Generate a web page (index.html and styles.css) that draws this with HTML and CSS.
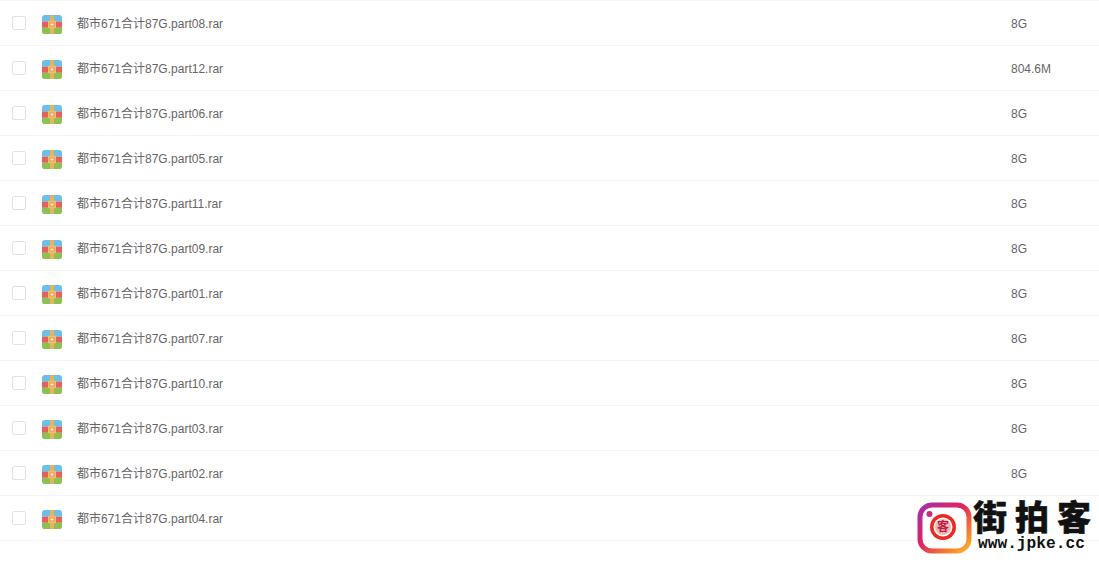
FILE: index.html
```html
<!DOCTYPE html>
<html lang="zh-CN">

<head>
    <meta charset="UTF-8">
    <title>文件列表</title>
    <link rel="stylesheet" href="styles.css">
</head>

<body>
    <svg class="defs" width="0" height="0">
        <symbol id="rar" viewBox="0 0 20 20" preserveAspectRatio="none">
            <path d="M3 0h14a3 3 0 0 1 3 3v4H0V3a3 3 0 0 1 3-3z" fill="#6cbfe8"/>
            <rect y="7" width="20" height="6.500" fill="#e5605c"/>
            <path d="M0 13.500h20V17a3 3 0 0 1-3 3H3a3 3 0 0 1-3-3z" fill="#8cc152"/>
            <rect x="8" width="4" height="20" fill="#e3b563"/>
            <rect x="6" y="6" width="8" height="8" fill="#f3bd62"/>
            <rect x="8" y="8.500" width="4" height="3" fill="#f6ead6" stroke="#d9805a" stroke-width=".7"/>
        </symbol>
    </svg>

    <ul class="list">
        <li class="row"><span class="check"></span><svg class="icon"><use href="#rar"/></svg><span class="name">都市671合计87G.part08.rar</span><span class="size">8G</span></li>
        <li class="row"><span class="check"></span><svg class="icon"><use href="#rar"/></svg><span class="name">都市671合计87G.part12.rar</span><span class="size">804.6M</span></li>
        <li class="row"><span class="check"></span><svg class="icon"><use href="#rar"/></svg><span class="name">都市671合计87G.part06.rar</span><span class="size">8G</span></li>
        <li class="row"><span class="check"></span><svg class="icon"><use href="#rar"/></svg><span class="name">都市671合计87G.part05.rar</span><span class="size">8G</span></li>
        <li class="row"><span class="check"></span><svg class="icon"><use href="#rar"/></svg><span class="name">都市671合计87G.part11.rar</span><span class="size">8G</span></li>
        <li class="row"><span class="check"></span><svg class="icon"><use href="#rar"/></svg><span class="name">都市671合计87G.part09.rar</span><span class="size">8G</span></li>
        <li class="row"><span class="check"></span><svg class="icon"><use href="#rar"/></svg><span class="name">都市671合计87G.part01.rar</span><span class="size">8G</span></li>
        <li class="row"><span class="check"></span><svg class="icon"><use href="#rar"/></svg><span class="name">都市671合计87G.part07.rar</span><span class="size">8G</span></li>
        <li class="row"><span class="check"></span><svg class="icon"><use href="#rar"/></svg><span class="name">都市671合计87G.part10.rar</span><span class="size">8G</span></li>
        <li class="row"><span class="check"></span><svg class="icon"><use href="#rar"/></svg><span class="name">都市671合计87G.part03.rar</span><span class="size">8G</span></li>
        <li class="row"><span class="check"></span><svg class="icon"><use href="#rar"/></svg><span class="name">都市671合计87G.part02.rar</span><span class="size">8G</span></li>
        <li class="row"><span class="check"></span><svg class="icon"><use href="#rar"/></svg><span class="name">都市671合计87G.part04.rar</span></li>
    </ul>

    <div class="mark">
        <svg class="mark-logo" viewBox="0 0 56 52">
            <defs>
                <linearGradient id="ig" x1="0" y1="0" x2="1" y2="1">
                    <stop offset="0" stop-color="#a42fa8"/>
                    <stop offset=".45" stop-color="#e0245e"/>
                    <stop offset=".8" stop-color="#f5842c"/>
                    <stop offset="1" stop-color="#fbb62f"/>
                </linearGradient>
            </defs>
            <rect x="3" y="3" width="49" height="46" rx="12" fill="#fff" stroke="url(#ig)" stroke-width="5"/>
            <circle cx="12.500" cy="12" r="3" fill="#c92a7c"/>
            <circle cx="26" cy="25" r="13" fill="#ea2a24"/>
            <circle cx="26" cy="25" r="9.500" fill="#fff"/>
            <circle cx="26" cy="25" r="8" fill="#f6b7ae"/>
        </svg>
        <span class="mark-seal">客</span>
        <div class="mark-text">
            <div class="mark-title">街拍客</div>
            <div class="mark-url">www.jpke.cc</div>
        </div>
    </div>
</body>

</html>
```

FILE: styles.css
```css
* {
    box-sizing: border-box;
}

html,
body {
    margin: 0;
    padding: 0;
    height: 572px;
    overflow: hidden;
    background-color: #fff;
}

body {
    position: relative;
    font-family: "Liberation Sans", "Noto Sans CJK SC", sans-serif;
    font-size: 12px;
    color: #666;
}

.defs {
    position: absolute;
}

.list {
    list-style: none;
    margin: 0;
    padding: 0;
    border-top: 1px solid #f7f7f8;
}

.row {
    display: flex;
    align-items: flex-start;
    height: 45px;
    border-bottom: 1px solid #f4f4f6;
    padding-left: 12px;
}

.check {
    width: 14px;
    height: 14px;
    margin-top: 15px;
    border: 1px solid #e2e3e6;
    border-radius: 2px;
    background-color: #fff;
}

.icon {
    width: 20px;
    height: 19px;
    margin-top: 14px;
    margin-left: 16px;
}

.name {
    width: 934px;
    margin-top: 14px;
    margin-left: 15px;
    line-height: 18px;
}

.size {
    margin-top: 14px;
    line-height: 18px;
}

.mark {
    position: absolute;
    left: 917px;
    top: 502px;
    width: 182px;
    height: 52px;
    display: flex;
}

.mark-logo {
    flex-shrink: 0;
    width: 56px;
    height: 52px;
}

.mark-seal {
    position: absolute;
    left: 19px;
    top: 17px;
    width: 14px;
    font-size: 12px;
    line-height: 16px;
    font-weight: bold;
    color: #b81f4a;
    text-align: center;
}

.mark-text {
    color: #111;
    white-space: nowrap;
}

.mark-title {
    font-family: "Noto Sans CJK SC", sans-serif;
    font-size: 34px;
    font-weight: 900;
    line-height: 30px;
    letter-spacing: 8px;
    margin-top: -1px;
    -webkit-text-stroke: .5px #111;
}

.mark-url {
    font-family: "Liberation Mono", monospace;
    font-size: 16.200px;
    font-weight: bold;
    line-height: 20px;
    margin-top: 3px;
    margin-left: 5px;
}
```
